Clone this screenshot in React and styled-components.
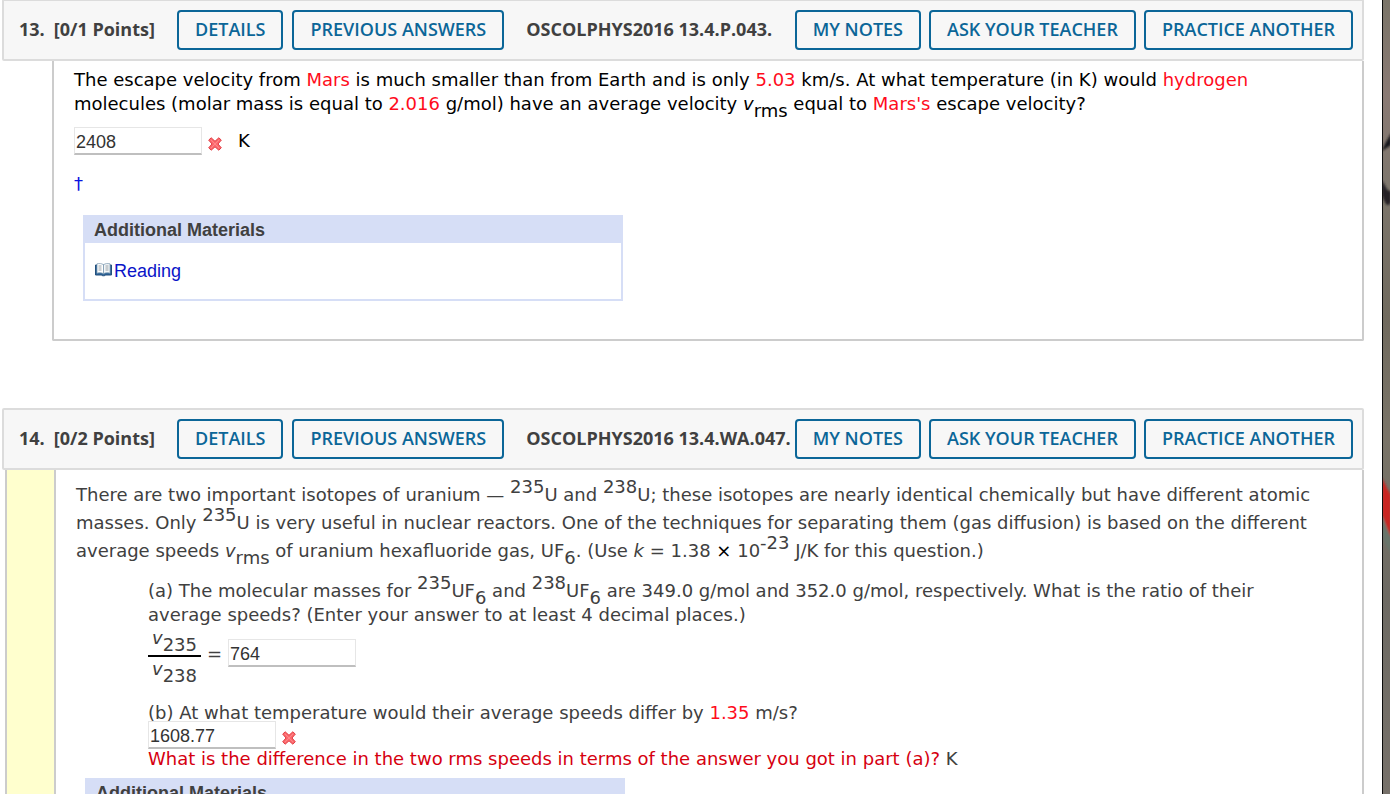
import styled, { createGlobalStyle } from 'styled-components'

const GlobalStyle = createGlobalStyle`
  * {
    box-sizing: border-box;
  }
  body {
    margin: 0;
    background: #fff;
    font-family: Verdana, 'DejaVu Sans', sans-serif;
    font-size: 18px;
    color: #404040;
  }
`

const Page = styled.div`
  display: flex;
  height: 100vh;
  overflow: hidden;
`
const Main = styled.main`
  flex: 1;
  min-width: 0;
  padding: 0 18px 0 2px;
`
const Desktop = styled.aside`
  width: 8px;
  flex-shrink: 0;
  border-left: 1px solid #0c0c0c;
  background: linear-gradient(#7a7468, #8a7a74 12%, #7d766c 24%, #706a5e 40%, #7a7468 55%, #6d6a63 75%, #77716a);

  svg {
    display: block;
  }
`

const Question = styled.section`
  margin-top: ${(props) => (props.$first ? '-1px' : '67px')};
`
const Header = styled.header`
  display: flex;
  align-items: center;
  justify-content: space-between;
  padding: 9px;
  padding-left: 15px;
  border: 2px solid #dcdcdc;
  border-radius: 2px;
  background: #f7f7f7;
  font-family: 'Open Sans', sans-serif;
`
const Group = styled.div`
  display: flex;
  align-items: center;
  gap: ${(props) => props.$gap || '8px'};
  white-space: nowrap;
`
const Title = styled.h2`
  display: flex;
  gap: 9px;
  width: 149px;
  margin: 0;
  padding-bottom: 2px;
  font-size: 18px;
  font-weight: 700;
  line-height: 24px;
`
const Code = styled.strong`
  margin-left: 13px;
  padding-bottom: 2px;
  font-weight: 700;
  line-height: 24px;
`
const Button = styled.button`
  height: 40px;
  padding: 0 16px 2px;
  border: 2px solid #0b6698;
  border-radius: 4px;
  background: #fff0;
  color: #0b6698;
  font-family: 'Open Sans', sans-serif;
  font-size: 18px;
  font-weight: 600;
  line-height: 24px;
  cursor: pointer;
`

const Body = styled.div`
  margin-left: ${(props) => (props.$marked ? '3px' : '50px')};
  border: 2px solid #ccc;
  border-top: 0;
  border-left-width: ${(props) => (props.$marked ? '0' : '2px')};
  border-radius: 0 0 2px 2px;
  display: flex;
`
const Marker = styled.div`
  width: 49px;
  flex-shrink: 0;
  border-left: 2px solid #ccc;
  background: #ffffce;
`
const Content = styled.div`
  flex: 1;
  min-width: 0;
  padding: ${(props) => (props.$marked ? '11px 20px 38px' : '7px 20px 38px')};
  border-left: ${(props) => (props.$marked ? '2px solid #ccc' : '0')};
  color: ${(props) => (props.$marked ? '#404040' : '#000')};
`
const Text = styled.p`
  margin: 0;
  line-height: ${(props) => (props.$loose ? '28px' : '24px')};
`
const Part = styled.div`
  margin: 14px 40px 0 72px;
`
const Sup = styled.sup`
  font-size: 18px;
  line-height: 0;
  vertical-align: 8px;
`
const Sub = styled.sub`
  font-size: 18px;
  line-height: 0;
  vertical-align: -7px;
`
const Value = styled.span`
  color: #ff0c1c;
`
const Times = styled.span`
  color: #000;
`
const Feedback = styled.span`
  color: #d6000f;
`

const AnswerRow = styled.div`
  display: flex;
  align-items: center;
  gap: 6px;
  margin: ${(props) => (props.$spaced ? '11px 0 0' : '-4px 0 -2px')};
`
const Mark = styled.span`
  display: flex;
  padding-top: 5px;
`
const Unit = styled.span`
  margin-left: 10px;
  line-height: 24px;
`
const Input = styled.input`
  width: 128px;
  height: 28px;
  padding: 3px 1px 0;
  border: 1px solid #e6e6e6;
  border-bottom: 2px solid #bfbfbf;
  border-radius: 0;
  background: #fff;
  color: #333;
  font-family: 'Liberation Sans', Arial, sans-serif;
  font-size: 18px;
`
const Ratio = styled.div`
  display: flex;
  align-items: center;
  gap: 6px;
  margin: 2px 0 24px;
`
const Fraction = styled.div`
  display: flex;
  flex-direction: column;
  width: 53px;
  text-align: center;
`
const Term = styled.span`
  height: 26px;
  line-height: 18px;

  & + & {
    height: 22px;
    border-top: 2px solid #000;
    padding-top: 3px;
  }
`
const Dagger = styled.a`
  display: block;
  width: 12px;
  margin-top: 17px;
  color: #0a14e0;
  line-height: 24px;
  text-decoration: none;
`

const Materials = styled.section`
  width: 540px;
  max-width: 100%;
  margin: ${(props) => (props.$tight ? '7px 0 0 9px' : '19px 0 0 9px')};
  border: 2px solid #d6def6;
  border-top: 0;
  font-family: 'Liberation Sans', Arial, sans-serif;
`
const MaterialsTitle = styled.h3`
  margin: 0 -2px;
  padding: 3px 11px 1px;
  background: #d6def6;
  color: #404040;
  font-size: 18px;
  font-weight: 700;
  line-height: 24px;
`
const Reading = styled.a`
  display: flex;
  align-items: center;
  gap: 2px;
  width: fit-content;
  padding: 16px 10px;
  color: #0a14c8;
  line-height: 24px;
  text-decoration: none;
`

const WrongIcon = () => (
  <svg width='14' height='14' viewBox='0 0 14 14' role='img' aria-label='Incorrect'>
    <path
      d='M3.2 .8 7 4.3l3.8-3.5 2.5 2.3L10 7l3.3 3.8-2.5 2.4L7 9.8l-3.8 3.4-2.5-2.4L4 7 .7 3.1z'
      fill='#fb6a6e'
      stroke='#e23c42'
      strokeWidth='1'
      strokeLinejoin='round'
    />
    <path d='m3 3 4 4 4-4M3 11l4-4 4 4' fill='none' stroke='#ff8588' strokeWidth='1' />
  </svg>
)

const BookIcon = () => (
  <svg width='17' height='16' viewBox='0 0 17 16' aria-hidden='true'>
    <path d='M.5 2v10h5.8c.6 1 3.8 1 4.4 0h5.8V2z' fill='#2f6599' stroke='#234f7c' />
    <path d='M2 .8c2.6-.5 5-.3 6.500 1v9C7 9.600 4.600 9.500 2 10.200z' fill='#fff' stroke='#7795ac' strokeWidth='.7' />
    <path d='M15 .8c-2.600-.5-5-.3-6.500 1v9c1.500-1.200 3.900-1.300 6.500-.6z' fill='#f3f6f8' stroke='#7795ac' strokeWidth='.7' />
    <path d='M3.500 3h3M3.500 5h3M3.500 7h3M10.500 3h3M10.500 5h3M10.500 7h3' stroke='#8e999f' strokeWidth='.9' />
  </svg>
)

const Wallpaper = () => (
  <svg width='7' height='794' viewBox='0 0 7 794' aria-hidden='true'>
    <defs>
      <filter id='soften' x='-50%' y='-10%' width='200%' height='120%'>
        <feGaussianBlur stdDeviation='1' />
      </filter>
    </defs>
    <g filter='url(#soften)'>
      <path d='M8 133C5 139 2 143 -1 151L8 145z' fill='#17151a' />
      <path d='M-1 181c3 2 4 11 9 10v11c-4 7-6 1-9-7z' fill='#262127' />
      <path d='M-1 478c3 5 6 13 9 17v42c-3-4-6-17-9-22z' fill='#c92720' />
      <path d='M-1 517c3 7 5 13 9 20v17c-4-7-7-12-9-20z' fill='#68756a' />
    </g>
  </svg>
)

const QuestionHeader = ({ number, points, code }) => (
  <Header>
    <Group $gap='9px'>
      <Title>
        <span>{number}.</span>
        <span>[{points} Points]</span>
      </Title>
      <Button>DETAILS</Button>
      <Button>PREVIOUS ANSWERS</Button>
      <Code>{code}</Code>
    </Group>
    <Group>
      <Button>MY NOTES</Button>
      <Button>ASK YOUR TEACHER</Button>
      <Button>PRACTICE ANOTHER</Button>
    </Group>
  </Header>
)

const AdditionalMaterials = ({ tight }) => (
  <Materials $tight={tight}>
    <MaterialsTitle>Additional Materials</MaterialsTitle>
    <Reading href='#reading'>
      <BookIcon />
      Reading
    </Reading>
  </Materials>
)

const App = () => {
  return (
    <Page>
      <GlobalStyle />
      <Main>
        <Question $first>
          <QuestionHeader number={13} points='0/1' code='OSCOLPHYS2016 13.4.P.043.' />
          <Body>
            <Content>
              <Text>
                The escape velocity from <Value>Mars</Value> is much smaller than from Earth and is only{' '}
                <Value>5.03</Value> km/s. At what temperature (in K) would <Value>hydrogen</Value> molecules
                (molar mass is equal to <Value>2.016</Value> g/mol) have an average velocity <i>v</i>
                <Sub>rms</Sub> equal to <Value>Mars's</Value> escape velocity?
              </Text>
              <AnswerRow $spaced>
                <Input aria-label='Temperature in K' defaultValue='2408' />
                <Mark>
                  <WrongIcon />
                </Mark>
                <Unit>K</Unit>
              </AnswerRow>
              <Dagger href='#note'>†</Dagger>
              <AdditionalMaterials />
            </Content>
          </Body>
        </Question>

        <Question>
          <QuestionHeader number={14} points='0/2' code='OSCOLPHYS2016 13.4.WA.047.' />
          <Body $marked>
            <Marker />
            <Content $marked>
              <Text $loose>
                There are two important isotopes of uranium — <Sup>235</Sup>U and <Sup>238</Sup>U; these
                isotopes are nearly identical chemically but have different atomic masses. Only{' '}
                <Sup>235</Sup>U is very useful in nuclear reactors. One of the techniques for separating them
                (gas diffusion) is based on the different average speeds <i>v</i>
                <Sub>rms</Sub> of uranium hexafluoride gas, UF<Sub>6</Sub>. (Use <i>k</i> = 1.38{' '}
                <Times>×</Times> 10<Sup>-23</Sup> J/K for this question.)
              </Text>
              <Part>
                <Text>
                  (a) The molecular masses for <Sup>235</Sup>UF<Sub>6</Sub> and <Sup>238</Sup>UF<Sub>6</Sub>{' '}
                  are 349.0 g/mol and 352.0 g/mol, respectively. What is the ratio of their average speeds?
                  (Enter your answer to at least 4 decimal places.)
                </Text>
                <Ratio>
                  <Fraction>
                    <Term>
                      <i>v</i>
                      <Sub>235</Sub>
                    </Term>
                    <Term>
                      <i>v</i>
                      <Sub>238</Sub>
                    </Term>
                  </Fraction>
                  <span>=</span>
                  <Input aria-label='Ratio of average speeds' defaultValue='764' />
                </Ratio>
                <Text>
                  (b) At what temperature would their average speeds differ by <Value>1.35</Value> m/s?
                </Text>
                <AnswerRow>
                  <Input aria-label='Temperature' defaultValue='1608.77' />
                  <Mark>
                    <WrongIcon />
                  </Mark>
                </AnswerRow>
                <Text>
                  <Feedback>
                    What is the difference in the two rms speeds in terms of the answer you got in part (a)?
                  </Feedback>{' '}
                  K
                </Text>
              </Part>
              <AdditionalMaterials tight />
            </Content>
          </Body>
        </Question>
      </Main>
      <Desktop>
        <Wallpaper />
      </Desktop>
    </Page>
  )
}

export default App
